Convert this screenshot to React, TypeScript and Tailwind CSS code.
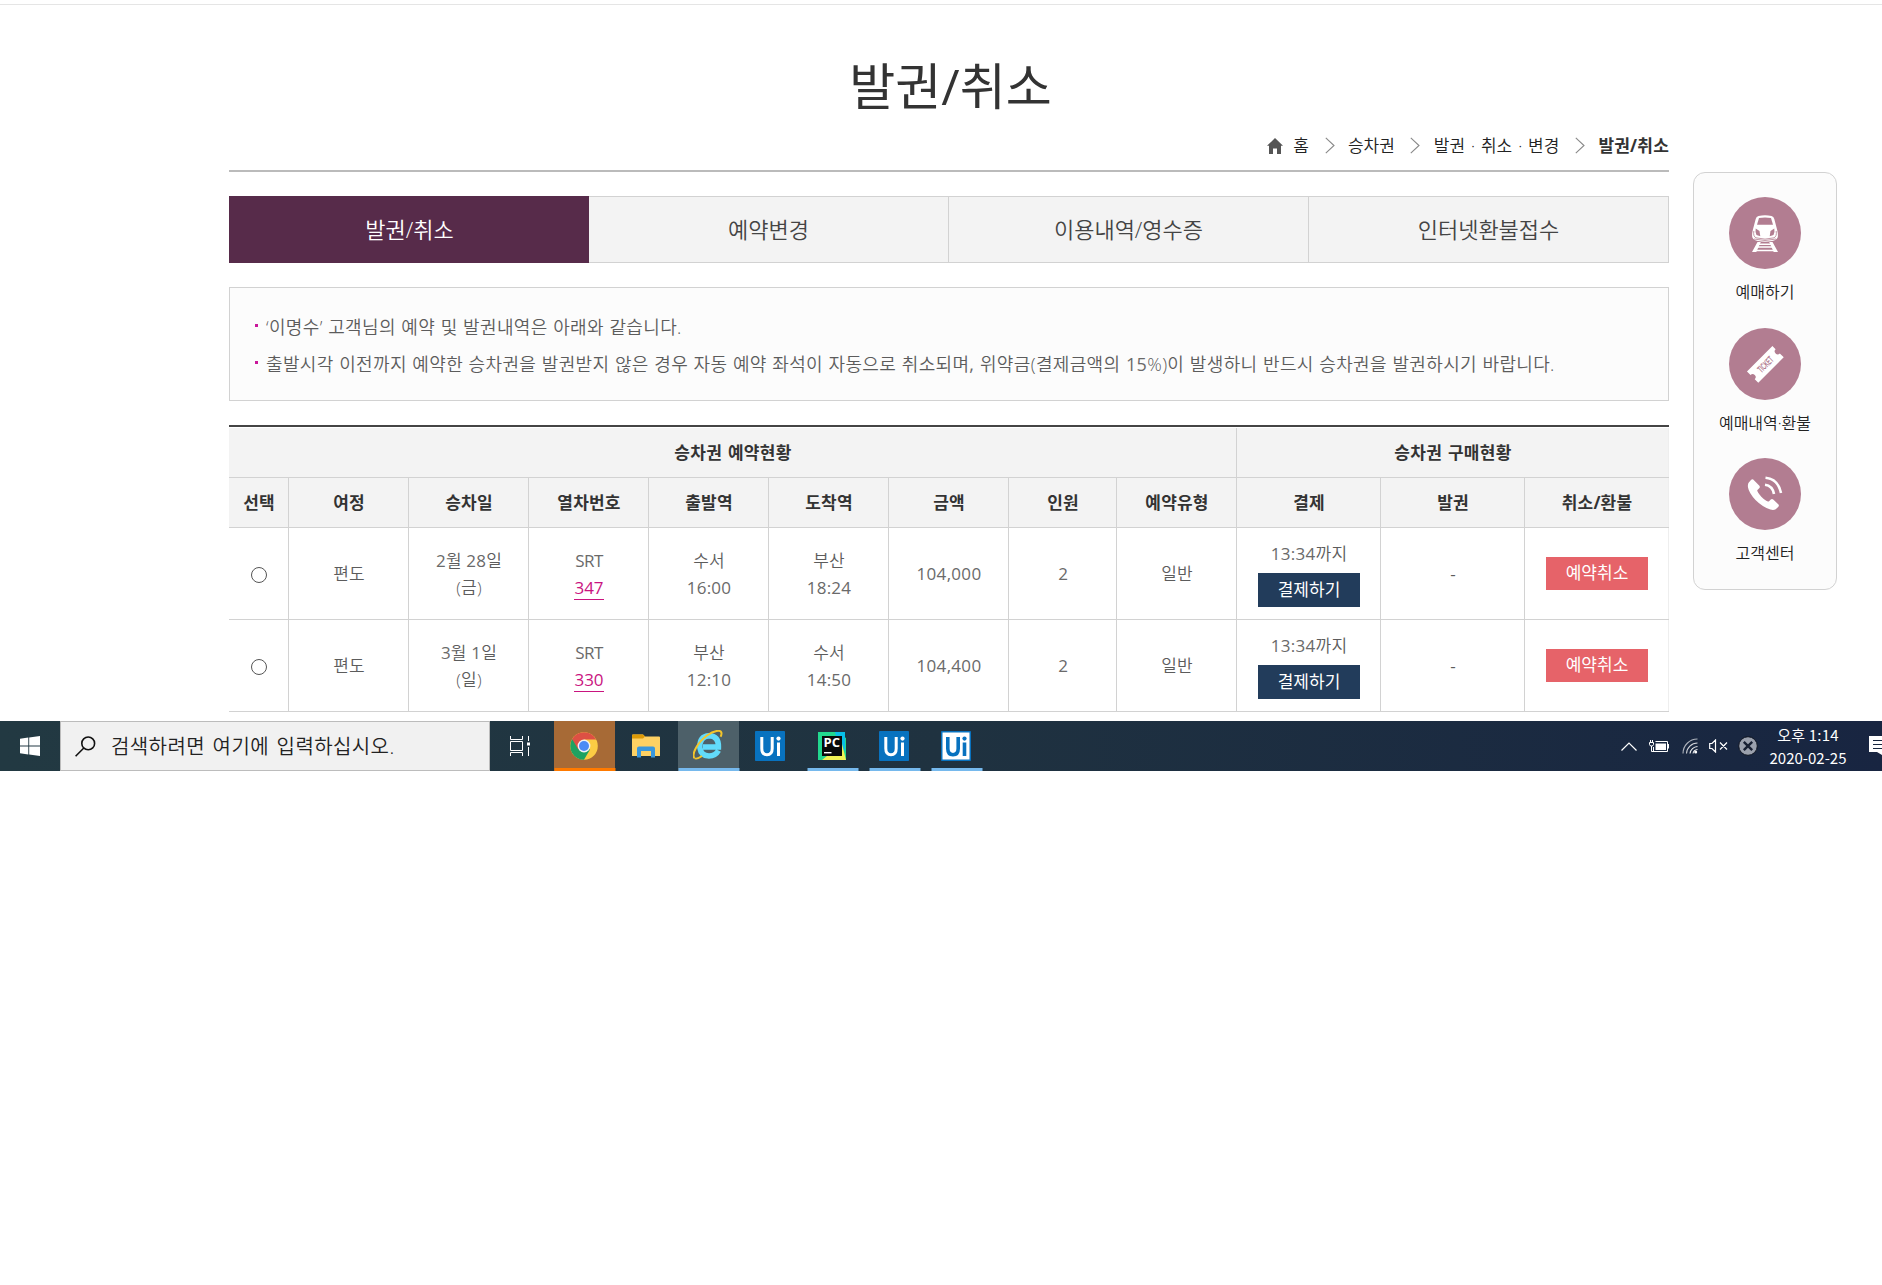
import React from "react";

const COLS = "grid grid-cols-[60px_120px_120px_120px_120px_120px_120px_108px_120px_144px_144px_144px]";

const headers = ["선택", "여정", "승차일", "열차번호", "출발역", "도착역", "금액", "인원", "예약유형", "결제", "발권", "취소/환불"];

const rows = [
  { date: "2월 28일", day: "(금)", no: "347", from: "수서", dep: "16:00", to: "부산", arr: "18:24", price: "104,000" },
  { date: "3월 1일", day: "(일)", no: "330", from: "부산", dep: "12:10", to: "수서", arr: "14:50", price: "104,400" },
];

function Crumb({ children }: { children: React.ReactNode }) {
  return <span className="whitespace-nowrap">{children}</span>;
}

function Arrow({ className }: { className: string }) {
  return (
    <svg width="10" height="17" viewBox="0 0 10 17" fill="none" stroke="#888" strokeWidth="1.1" className={className}>
      <path d="M.8.8 9 8.5.8 16.2" />
    </svg>
  );
}

function Cell({ children, className = "" }: { children: React.ReactNode; className?: string }) {
  return (
    <div className={`flex flex-col items-center justify-center border-r border-[#d2d2d2] pl-px last:border-[#eeeeee] ${className}`}>
      {children}
    </div>
  );
}

/* Splits a label so that digits and Latin signs take the regular weight beside the lighter Hangul. */
function Mixed({ text }: { text: string }) {
  return (
    <>
      {text.split(/([0-9:,]+)/).map((part, i) => (i % 2 ? <span key={i} className="font-normal text-[#6a6a6a]">{part}</span> : part))}
    </>
  );
}

function TwoLines({ a, b }: { a: string; b: string }) {
  return (
    <div className="text-center leading-[27px] tracking-[0.2px]">
      <div><Mixed text={a} /></div>
      <div><Mixed text={b} /></div>
    </div>
  );
}

function TrainIcon() {
  return (
    <svg width="26" height="37" viewBox="0 0 26 37">
      <path d="M6.500 .9Q13-.5 19.500 .9 21.700 1.500 22.300 4L25.200 15Q26.500 20.500 25.500 22.800 24.500 25 20 26 13 27.300 6 26 1.500 25 .5 22.800-.5 20.500 .8 15L3.700 4Q4.300 1.500 6.500 .9Z" fill="#fff" />
      <path d="M7 3Q13 2 19 3L21 9.700H5Z" fill="#b27d91" />
      <path d="M3.700 13.500 7.500 16 8.300 21.300 4.500 20Q3 17 3.700 13.500ZM22.300 13.500 18.500 16 17.700 21.300 21.500 20Q23 17 22.300 13.500Z" fill="#b27d91" />
      <path d="M1.800 16Q1 21.500 4 22.800 13 25.500 22 22.800 25 21.500 24.200 16M2 24Q13 27 24 24" fill="none" stroke="#b27d91" strokeWidth=".8" />
      <path d="M5.500 27H8.800L4.300 37H0ZM20.500 27H17.200L21.700 37H26Z" fill="#fff" />
      <path d="M7 29.300H19M6 32H20M4 35.500H22" stroke="#fff" strokeWidth="1.500" />
    </svg>
  );
}

function TicketIcon() {
  return (
    <svg width="40" height="40" viewBox="0 0 40 40" className="overflow-visible">
      <g transform="rotate(-45 20 20)">
        <path d="M2 12.500H38V17A3 3 0 0 0 38 23V28.500H2V23.500A3 3 0 0 0 2 17.500Z" fill="#fff" />
        <text x="20" y="24" textAnchor="middle" fontSize="10" fontWeight="700" textLength="18" lengthAdjust="spacingAndGlyphs" fill="#b27d91" fontFamily="Liberation Sans">TICKET</text>
      </g>
    </svg>
  );
}

function PhoneIcon() {
  return (
    <svg width="36" height="36" viewBox="0 0 36 36">
      <path d="M6.200 3.600 12.400 9.800Q13.300 11 12.200 12.200L10.200 14.200Q10 16 14.300 20.700 19.500 25.900 21.800 25.500L23.800 23.500Q25 22.600 26.200 23.500L31.500 28.500Q32.300 29.600 31.400 30.700L28.700 33.300Q26.500 34.600 23.400 33.600 15.500 31 8.500 24 2 17 1 11.500 .5 8 1.800 6.500L4.200 3.800Q5.200 2.900 6.200 3.600Z" fill="#fff" />
      <path d="M18 8.800Q25.500 9.800 27 18M18.500 1.800Q31 3 34 17" fill="none" stroke="#fff" strokeWidth="2.600" />
    </svg>
  );
}

function Quick({ label, children, className }: { label: string; children: React.ReactNode; className: string }) {
  return (
    <div className={`flex flex-col items-center ${className}`}>
      <div className="flex h-[72px] w-[72px] items-center justify-center rounded-full bg-[#b27d91]">{children}</div>
      <span className="mt-[11px] whitespace-nowrap text-[16px] leading-6 text-[#222]">{label}</span>
    </div>
  );
}

function Task({ children, bg = "", line = "" }: { children: React.ReactNode; bg?: string; line?: string }) {
  return (
    <div className={`relative mr-px flex h-[50px] w-[61px] shrink-0 items-center justify-center pr-px ${bg}`}>
      {children}
      {line && <span className={`absolute bottom-0 left-1/2 h-[3px] -translate-x-1/2 ${line}`} />}
    </div>
  );
}

function UiIcon({ light = false }: { light?: boolean }) {
  return (
    <svg width="30" height="30" viewBox="0 0 30 30">
      <rect width="30" height="30" rx=".8" fill="#0872bf" />
      {light && <rect x="1.500" y="1.500" width="27" height="27" fill="#fff" />}
      <g fill="none" stroke={light ? "#0872bf" : "#fff"} strokeWidth={light ? 3.6 : 3}>
        <path d="M6.800 6V17.500Q6.800 23.700 12 23.700T17.200 17.500V6M23.500 11.500V25" />
      </g>
      <circle cx="23.500" cy="7.600" r="2.100" fill={light ? "#0872bf" : "#fff"} />
    </svg>
  );
}

function Taskbar() {
  return (
    <div className="flex h-[50px] w-full items-center overflow-hidden bg-linear-to-r from-[#223942] via-[#1f3240] to-[#182541]">
      <div className="flex w-[60px] shrink-0 justify-center">
        <svg width="20" height="20" viewBox="0 0 20 20" fill="#fff">
          <path d="M0 2.800 8.300 1.600V9.500H0ZM9.200 1.500 20 0V9.500H9.200ZM0 10.400H8.300V18.400L0 17.200ZM9.200 10.400H20V20L9.200 18.500Z" />
        </svg>
      </div>
      <div className="flex h-[50px] w-[430px] shrink-0 items-center border border-[#bcbcbc] bg-[#f1f1f1] pl-[14px]">
        <svg width="21" height="21" viewBox="0 0 21 21" fill="none" stroke="#111" strokeWidth="1.600">
          <circle cx="13.200" cy="7.400" r="6.400" />
          <path d="M8.800 12 .6 20.200" />
        </svg>
        <span className="ml-[15px] whitespace-nowrap text-[20px] leading-[47px] tracking-[0.4px] text-[#222] [word-spacing:2px]">검색하려면 여기에 입력하십시오.</span>
      </div>
      <div className="flex w-[64px] shrink-0 pl-[20px]">
        <svg width="20" height="20" viewBox="0 0 20 20" fill="none" stroke="#fff" strokeWidth="1">
          <path d="M.5 0V3.500H12.500V0M.5 5.500H12.500V14.500H.5ZM.5 20V16.500H12.500V20M18.500 0V5M18.500 11V20" />
          <rect x="17" y="6.500" width="3" height="3" fill="#fff" stroke="none" />
        </svg>
      </div>
      <Task bg="bg-[#a76a36]" line="w-[61px] bg-[#ff7a00]">
        <svg width="28" height="28" viewBox="0 0 28 28">
          <circle cx="14" cy="14" r="13.800" fill="#fccc44" />
          <path d="M14 14 2.100 7.100A13.800 13.800 0 0 0 14 27.800L20 17.500Z" fill="#1da261" />
          <path d="M14 7.500H26.200A13.800 13.800 0 0 0 2.100 7.100L8.300 17.500Z" fill="#dd5044" />
          <circle cx="14" cy="14" r="6.400" fill="#f3f3f3" />
          <circle cx="14" cy="14" r="5" fill="#4c8bf5" />
        </svg>
      </Task>
      <Task>
        <svg width="28" height="24" viewBox="0 0 28 24">
          <path d="M0 1.500Q0 .5 1 .5H11L13 2.500H27Q28 2.500 28 3.500V22H0Z" fill="#fed163" />
          <path d="M0 1.500Q0 .5 1 .5H11L13 2.500 11 4.500H0Z" fill="#dd9a06" />
          <path d="M5 23.500V14.500Q5 12.500 7 12.500H21Q23 12.500 23 14.500V23.500H19V17H9V23.500Z" fill="#3a97dc" />
        </svg>
      </Task>
      <Task bg="bg-[#4d6069]" line="w-[61px] bg-[#76b9ed]">
        <svg width="30" height="30" viewBox="0 0 30 30" fill="none" className="mt-[-2px]">
          <path d="M25.500 20.500Q22.500 26 16 26 8 26 6.800 17.500 6.500 6.200 16 5.700 25.800 6 25.500 17H10" stroke="#62dbfb" strokeWidth="5.400" />
          <path d="M1.500 28.200C-2 24 5 12 14 5.500 21 .5 27.500-.5 28.400 2.600 28.700 4 28.300 5.500 27.600 6.800" stroke="#f4c52b" strokeWidth="2" />
          <path d="M1.500 28.200Q4 29.500 9 26" stroke="#f4c52b" strokeWidth="1.800" />
        </svg>
      </Task>
      <Task><UiIcon /></Task>
      <Task line="w-[51px] bg-[#76b9ed]">
        <svg width="28" height="28" viewBox="0 0 28 28">
          <path d="M0 0H19L28 6V28H0Z" fill="#22d88f" />
          <path d="M17 0H27V19L20 14Z" fill="#07bfe8" />
          <path d="M4 28 24 12 28 28Z" fill="#f2f254" />
          <rect x="4" y="4" width="20" height="20" fill="#0a0a0a" />
          <text x="5.500" y="15" fontSize="11.500" fontWeight="700" fill="#fff" textLength="16.500" lengthAdjust="spacingAndGlyphs" fontFamily="Open Sans">PC</text>
          <rect x="6" y="20" width="7.500" height="1.400" fill="#fff" />
        </svg>
      </Task>
      <Task line="w-[51px] bg-[#76b9ed]"><UiIcon /></Task>
      <Task line="w-[51px] bg-[#76b9ed]"><UiIcon light /></Task>

      <div className="ml-auto flex shrink-0 items-center">
        <svg width="16" height="9" viewBox="0 0 16 9" fill="none" stroke="#fff" strokeWidth="1.200">
          <path d="M.5 8.500 8 1 15.500 8.500" />
        </svg>
        <svg width="21" height="14" viewBox="0 0 21 14" className="ml-[12px]">
          <path d="M.5 3.500H4.500V5.500Q4.500 7 2.500 7T.5 5.500ZM1.500 1V3M3.500 1V3M2.500 7V12.500H5M6.500 2.500H18.500V12.500H4.500V8M19.500 5V9.500" fill="none" stroke="#fff" />
          <path d="M6.500 4.500H17V11H6.500Z" fill="#fff" />
        </svg>
        <svg width="16" height="16" viewBox="0 0 16 16" fill="none" stroke="#fff" strokeWidth="1.100" className="ml-[12px]">
          <path d="M1 15.500A14.500 14.500 0 0 1 15.500 1" opacity=".65" />
          <path d="M4.500 15.500A11 11 0 0 1 15.500 5" opacity=".8" />
          <path d="M8 15.500A8 8 0 0 1 15.500 8.500M11 15.500A5 5 0 0 1 15.500 11.500" opacity=".9" />
          <circle cx="13.700" cy="14" r="1.500" fill="#fff" stroke="none" />
        </svg>
        <svg width="19" height="14" viewBox="0 0 19 14" fill="none" stroke="#fff" strokeWidth="1.200" className="ml-[11px]">
          <path d="M.7 4.500H3L6.500 1V13L3 9.500H.7ZM11 3.500 18 10.500M18 3.500 11 10.500" />
        </svg>
        <svg width="20" height="20" viewBox="0 0 20 20" className="ml-[10px]">
          <circle cx="10" cy="10" r="9.300" fill="#9ba1ad" stroke="#0e1420" />
          <path d="M5.800 5.800 14.200 14.200M14.200 5.800 5.800 14.200" stroke="#182032" strokeWidth="2.400" />
        </svg>
        <div className="ml-[10px] w-[80px] whitespace-nowrap text-center text-[15px] font-normal leading-[23px] text-white [font-family:'Noto_Sans_CJK_KR',sans-serif]">
          <div className="tracking-[0.2px]">오후 1:14</div>
          <div>2020-02-25</div>
        </div>
        <svg width="13" height="21" viewBox="0 0 13 21" className="ml-[21px]">
          <path d="M0 0H13V19L8 16H0Z" fill="#fff" />
          <path d="M4 4.500H13M4 8.500H13M4 12.500H13" stroke="#18263f" strokeWidth="1.200" />
        </svg>
      </div>
    </div>
  );
}

export default function App() {
  return (
    <div className="h-[1285px] w-[1882px] overflow-hidden bg-white text-[#5c5c5c] [font-family:'Open_Sans','Noto_Sans_CJK_KR',sans-serif] [font-weight:350]">
      <div className="h-[721px] pt-[4px]">
        <div className="h-px bg-[#e5e5e5]" />
        <div className="flex items-start pl-[229px]">
          <main className="w-[1440px]">
            <h1 className="mt-[46px] pl-[3px] text-center text-[50px] font-normal leading-[70px] text-[#333]">발권/취소</h1>
            <div className="mt-[10px] flex h-[39px] items-start justify-end whitespace-nowrap text-[17px] leading-[30px] text-[#222] [word-spacing:1.5px]">
              <svg width="16" height="16" viewBox="0 0 16 16" fill="#555" className="mr-[10px] mt-[7px]">
                <path d="M8 0 16 7.800H14V16H10V10.500H6V16H2V7.800H0Z" />
              </svg>
              <Crumb>홈</Crumb>
              <Arrow className="ml-[16px] mr-[13px] mt-[6px]" />
              <Crumb>승차권</Crumb>
              <Arrow className="ml-[15px] mr-[14px] mt-[6px]" />
              <Crumb>발권 · 취소 · 변경</Crumb>
              <Arrow className="ml-[16px] mr-[13px] mt-[6px]" />
              <b className="font-bold tracking-[0.2px] text-[#333]">발권/취소</b>
            </div>
            <div className="h-[2px] bg-[#bbb]" />

            <nav className="mt-[24px] grid h-[67px] grid-cols-4 text-center text-[22px] leading-[65px] text-[#444]">
              <div className="border border-[#572b4a] bg-[#572b4a] pl-px text-white">발권/취소</div>
              <div className="border-y border-r border-[#d2d2d2] bg-[#f3f3f3]">예약변경</div>
              <div className="border-y border-r border-[#d2d2d2] bg-[#f3f3f3]">이용내역/영수증</div>
              <div className="border-y border-r border-[#d2d2d2] bg-[#f3f3f3]">인터넷환불접수</div>
            </nav>

            <ul className="mt-[24px] h-[114px] whitespace-nowrap border border-[#d2d2d2] bg-[#fcfcfc] pl-[25px] pt-[21px] text-[18px] leading-[37px] tracking-[0.35px] [word-spacing:0.5px]">
              <li className="flex items-start">
                <i className="mr-[8px] mt-[15px] h-[3px] w-[3px] bg-[#c9179a]" />‘이명수’ 고객님의 예약 및 발권내역은 아래와 같습니다.
              </li>
              <li className="flex items-start">
                <i className="mr-[8px] mt-[15px] h-[3px] w-[3px] bg-[#c9179a]" />
                <span><Mixed text="출발시각 이전까지 예약한 승차권을 발권받지 않은 경우 자동 예약 좌석이 자동으로 취소되며, 위약금(결제금액의 15%)이 발생하니 반드시 승차권을 발권하시기 바랍니다." /></span>
              </li>
            </ul>

            <section className="mt-[24px] border-t-2 border-[#444] text-[17px]">
              <div className="mt-px grid h-[50px] grid-cols-[1008px_432px] border-b border-[#d2d2d2] bg-[#f3f3f3] font-bold leading-[24px] tracking-[0.3px] text-[#333] [word-spacing:1px]">
                <Cell>승차권 예약현황</Cell>
                <Cell>승차권 구매현황</Cell>
              </div>
              <div className={`${COLS} h-[50px] border-b border-[#d2d2d2] bg-[#f3f3f3] font-bold leading-[24px] tracking-[0.2px] text-[#333]`}>
                {headers.map((h) => <Cell key={h} className="pt-px">{h}</Cell>)}
              </div>
              {rows.map((r) => (
                <div key={r.no} className={`${COLS} h-[92px] border-b border-[#d2d2d2]`}>
                  <Cell><span className="mt-[3px] h-[16px] w-[16px] rounded-full border border-[#555]" /></Cell>
                  <Cell className="pt-px">편도</Cell>
                  <Cell><TwoLines a={r.date} b={r.day} /></Cell>
                  <Cell>
                    <div className="-mt-px text-center font-normal text-[#6a6a6a]">
                      <div className="leading-[27px] tracking-[-0.5px]">SRT</div>
                      <div className="mt-[3px] border-b border-[#c9147f] leading-[22px] text-[#c9147f]">{r.no}</div>
                    </div>
                  </Cell>
                  <Cell><TwoLines a={r.from} b={r.dep} /></Cell>
                  <Cell><TwoLines a={r.to} b={r.arr} /></Cell>
                  <Cell className="pt-px font-normal tracking-[0.3px] text-[#6a6a6a]">{r.price}</Cell>
                  <Cell className="pt-px font-normal text-[#6a6a6a]">2</Cell>
                  <Cell className="pt-px">일반</Cell>
                  <Cell>
                    <div className="leading-[26px] tracking-[0.3px]"><Mixed text="13:34까지" /></div>
                    <div className="mt-[6px] h-[34px] w-[102px] bg-[#223c5b] text-center font-normal leading-[33px] text-white">결제하기</div>
                  </Cell>
                  <Cell className="font-normal">-</Cell>
                  <Cell><div className="h-[33px] w-[102px] bg-[#e66369] text-center font-normal leading-[32px] text-white">예약취소</div></Cell>
                </div>
              ))}
            </section>
          </main>

          <aside className="ml-[24px] mt-[167px] h-[418px] w-[144px] rounded-[12px] border border-[#d2d2d2] bg-[#fcfcfc] pt-[24px]">
            <Quick label="예매하기" className="h-[131px]"><TrainIcon /></Quick>
            <Quick label="예매내역·환불" className="h-[130px]"><TicketIcon /></Quick>
            <Quick label="고객센터" className="h-[130px]"><PhoneIcon /></Quick>
          </aside>
        </div>
      </div>
      <Taskbar />
    </div>
  );
}
